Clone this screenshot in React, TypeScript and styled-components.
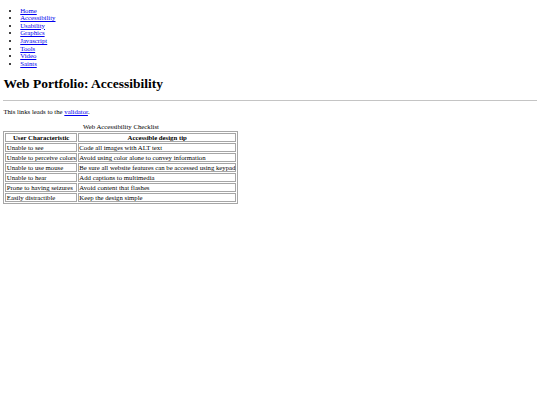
import React from "react";
import styled, { createGlobalStyle } from "styled-components";

const GlobalStyle = createGlobalStyle`
  html {
    background: #ffffff;
  }
  body {
    margin: 0 3.375px 3.375px 3.375px;
    font-family: "Liberation Serif", "Times New Roman", serif;
    font-size: 6.75px;
    line-height: 7.57px;
    color: #000000;
  }
`;

const NavList = styled.ul`
  margin: 6.75px 0;
  padding-left: 16.875px;
  list-style: disc;
`;

const NavItem = styled.li`
  line-height: 7.57px;
`;

const Link = styled.a`
  color: #0000ee;
  text-decoration: underline;
`;

const Title = styled.h1`
  font-size: 13.5px;
  line-height: 15.1px;
  font-weight: bold;
  margin: 9.05px 0;
`;

const Rule = styled.hr`
  margin: 3.375px 0;
  height: 0;
  border-style: solid;
  border-width: 1px 0 0 0;
  border-color: #c4c4c4;
`;

const Paragraph = styled.p`
  margin: 6.75px 0;
`;

const Table = styled.table`
  border-collapse: separate;
  border-spacing: 1px;
  border: 1px solid #a6a6a6;
  line-height: 7px;
`;

const Caption = styled.caption`
  text-align: center;
  line-height: 7.57px;
  padding-bottom: 0.5px;
`;

const HeadCell = styled.th`
  border: 1px solid #a6a6a6;
  padding: 0;
  font-weight: bold;
  text-align: center;
`;

const Cell = styled.td`
  border: 1px solid #a6a6a6;
  padding: 0 0 0 0.4px;
  text-align: left;
  white-space: nowrap;
`;

const navLinks = [
  "Home",
  "Accessibility",
  "Usability",
  "Graphics",
  "Javascript",
  "Tools",
  "Video",
  "Saints",
];

const rows: [string, string][] = [
  ["Unable to see", "Code all images with ALT text"],
  ["Unable to perceive colors", "Avoid using color alone to convey information"],
  ["Unable to use mouse", "Be sure all website features can be accessed using keypad"],
  ["Unable to hear", "Add captions to multimedia"],
  ["Prone to having seizures", "Avoid content that flashes"],
  ["Easily distractible", "Keep the design simple"],
];

export default function App() {
  return (
    <>
      <GlobalStyle />
      <NavList>
        {navLinks.map((l) => (
          <NavItem key={l}>
            <Link href="#">{l}</Link>
          </NavItem>
        ))}
      </NavList>
      <Title>Web Portfolio: Accessibility</Title>
      <Rule />
      <Paragraph>
        This links leads to the <Link href="#">validator</Link>.
      </Paragraph>
      <Table>
        <Caption>Web Accessibility Checklist</Caption>
        <tbody>
          <tr>
            <HeadCell>User Characteristic</HeadCell>
            <HeadCell>Accessible design tip</HeadCell>
          </tr>
          {rows.map(([a, b]) => (
            <tr key={a}>
              <Cell>{a}</Cell>
              <Cell>{b}</Cell>
            </tr>
          ))}
        </tbody>
      </Table>
    </>
  );
}
